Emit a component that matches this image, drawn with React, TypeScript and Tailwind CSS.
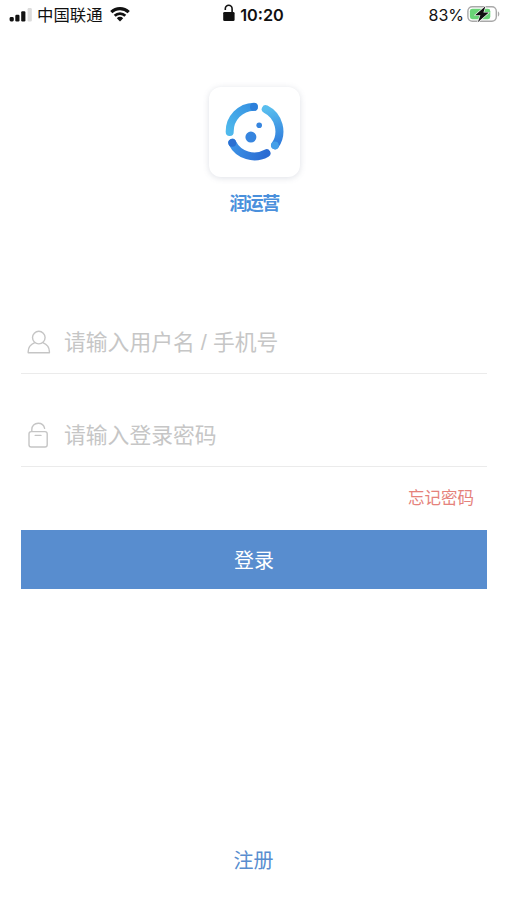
import type { ReactNode } from "react";

function SignalIcon() {
  return (
    <svg width="23" height="15" viewBox="0 0 23 15" className="shrink-0">
      <rect x="0.6" y="9" width="4.2" height="4.5" rx="1.4" fill="#111" />
      <rect x="6.3" y="6.8" width="4.2" height="6.7" rx="1.2" fill="#111" />
      <rect x="12.2" y="3.3" width="4.2" height="10.2" rx="1.2" fill="#111" />
      <rect x="18.6" y="0" width="4.2" height="13.5" rx="1.2" fill="#dcdcdc" />
    </svg>
  );
}

function WifiIcon() {
  return (
    <svg width="20" height="15" viewBox="0 0 20 15" fill="none" className="mb-px shrink-0">
      <path d="M1.3 5.2a12.4 12.4 0 0 1 17.4 0" stroke="#111" strokeWidth="3.2" />
      <path d="M4.7 8.8a7.6 7.6 0 0 1 10.6 0" stroke="#111" strokeWidth="2.8" />
      <path d="M10 14.4 6.8 11.2a4.5 4.5 0 0 1 6.4 0z" fill="#111" />
    </svg>
  );
}

function OpenLockIcon() {
  return (
    <svg width="13" height="18" viewBox="0 0 13 18" fill="none" className="mb-[4px] shrink-0">
      <path d="M2.3 6V4.7a3.4 3.4 0 0 1 6.8 0V9" stroke="#111" strokeWidth="1.6" />
      <rect x="0.2" y="8" width="11.4" height="9" rx="1.3" fill="#111" />
    </svg>
  );
}

function BatteryIcon() {
  return (
    <svg width="33" height="18" viewBox="0 0 33 18" fill="none" className="mb-[2px] shrink-0">
      <rect x="0.9" y="1.8" width="28.4" height="14.4" rx="4.4" fill="#fff" stroke="#a9a9a9" strokeWidth="1.4" />
      <rect x="2.9" y="3.8" width="20.4" height="10.4" rx="2.4" fill="#69d476" />
      <path d="M30.9 6.6c1.9.6 1.9 4.4 0 5z" fill="#a9a9a9" />
      <path
        d="M18.4 1.2 8 10.2h5.4l-2.6 7 11-9.6h-5.4z"
        fill="#111"
        stroke="#fff"
        strokeWidth="1.2"
        paintOrder="stroke"
        strokeLinejoin="round"
      />
    </svg>
  );
}

function Logo() {
  return (
    <svg width="60" height="60" viewBox="-29.5 -29.5 60 60" fill="none">
      <defs>
        <linearGradient id="left" gradientUnits="userSpaceOnUse" x1="-25" y1="1" x2="0" y2="-25">
          <stop stopColor="#4fb9ec" />
          <stop offset="1" stopColor="#3591e2" />
        </linearGradient>
        <linearGradient id="right" gradientUnits="userSpaceOnUse" x1="11" y1="-22" x2="21" y2="14">
          <stop stopColor="#58bdee" />
          <stop offset="1" stopColor="#2f7bdc" />
        </linearGradient>
        <linearGradient id="bottom" gradientUnits="userSpaceOnUse" x1="-22" y1="12" x2="12" y2="22">
          <stop stopColor="#3c92e5" />
          <stop offset="1" stopColor="#2b6bd2" />
        </linearGradient>
      </defs>
      <g strokeWidth="8" strokeLinecap="round">
        <path d="M-24.8 0.5A24.8 24.8 0 0 1-0.6-24.8" stroke="url(#left)" />
        <path d="M11.2-22.3A24.8 24.8 0 0 1 20.6 13.8" stroke="url(#right)" />
        <path d="M-22.3 11.2A24.8 24.8 0 0 0 12 21.7" stroke="url(#bottom)" />
      </g>
      <circle cx="-0.6" cy="-24.6" r="3.9" fill="#2c7fda" />
      <circle cx="20.4" cy="13.8" r="3.9" fill="#459fe8" />
      <circle cx="-22.2" cy="11.3" r="3.9" fill="#2b6fd1" />
      <circle cx="-3.6" cy="5.6" r="5.5" fill="#3685df" />
      <circle cx="4.7" cy="-6.2" r="2.8" fill="#3685df" />
    </svg>
  );
}

function UserIcon() {
  return (
    <svg width="24" height="26" viewBox="0 0 24 26" fill="none" stroke="#c5c5c5" strokeWidth="1.4" strokeLinejoin="round">
      <circle cx="11.8" cy="7.6" r="6.3" />
      <path d="M7.8 12.7C3.8 14.4 1.2 17.6 1.2 21.6v1.2h21.2v-1.2c0-4-2.6-7.2-6.6-8.9" />
    </svg>
  );
}

function PasswordIcon() {
  return (
    <svg width="24" height="28" viewBox="0 0 24 28" fill="none" stroke="#c5c5c5" strokeWidth="1.4" strokeLinecap="round">
      <rect x="2" y="9.6" width="18.2" height="15.4" rx="2.2" />
      <path d="M4.8 9.4V7.4C4.8 3.7 7.5 1.2 11.2 1.2c3.4 0 5.8 2 6.4 5.2M8.2 13.4h5.8" />
    </svg>
  );
}

function Field({ icon, label }: { icon: ReactNode; label: string }) {
  return (
    <div className="flex h-[62px] items-center border-b border-[#ebebeb] pl-[6px] text-[#c6c6c6]">
      <span className="flex w-[37px] shrink-0">{icon}</span>
      <span className="whitespace-pre text-[21.8px] leading-[30px]">{label}</span>
    </div>
  );
}

export default function App() {
  return (
    <main className="flex h-[900px] w-[507px] flex-col overflow-hidden bg-white font-['Liberation_Sans','Noto_Sans_CJK_SC',sans-serif]">
      {/* Status bar */}
      <header className="grid h-[30px] shrink-0 grid-cols-3 items-center text-[#111]">
        <div className="flex items-center pl-[9px]">
          <SignalIcon />
          <span className="ml-[5px] mr-[7px] pt-px text-[16.4px] leading-[29px]">中国联通</span>
          <WifiIcon />
        </div>
        <div className="flex items-center justify-center gap-1 font-['Inter',sans-serif]">
          <OpenLockIcon />
          <span className="text-[16.3px] leading-[30px] font-semibold">10:20</span>
        </div>
        <div className="flex items-center justify-end gap-[3px] pr-[7px] font-['Inter',sans-serif]">
          <span className="text-[16px] leading-[30px]">83%</span>
          <BatteryIcon />
        </div>
      </header>

      {/* Brand */}
      <section className="flex h-[282px] shrink-0 flex-col items-center pt-[57px]">
        <div className="ml-[2px] flex h-[90px] w-[91px] items-center justify-center rounded-[12px] bg-white shadow-[0_1px_6px_rgba(90,100,130,0.2)]">
          <Logo />
        </div>
        <h1 className="mt-[13px] ml-px text-[18px] leading-[28px] font-bold tracking-[-1.7px] text-[#4a90dc]">润运营</h1>
      </section>

      {/* Login form */}
      <form className="ml-[21px] flex w-[466px] shrink-0 flex-col">
        <Field icon={<UserIcon />} label="请输入用户名 / 手机号" />
        <div className="mt-[31px]">
          <Field icon={<PasswordIcon />} label="请输入登录密码" />
        </div>
        <a className="mt-[17px] mr-[13px] self-end text-[16.5px] leading-[28px] text-[#e5827b]">忘记密码</a>
        <button type="button" className="mt-[18px] h-[59px] bg-[#588dcf] pt-[2px] text-[20px] text-white">
          登录
        </button>
      </form>

      <a className="mt-auto mb-[24px] text-center text-[20px] leading-[30px] text-[#588dcf]">注册</a>
    </main>
  );
}
